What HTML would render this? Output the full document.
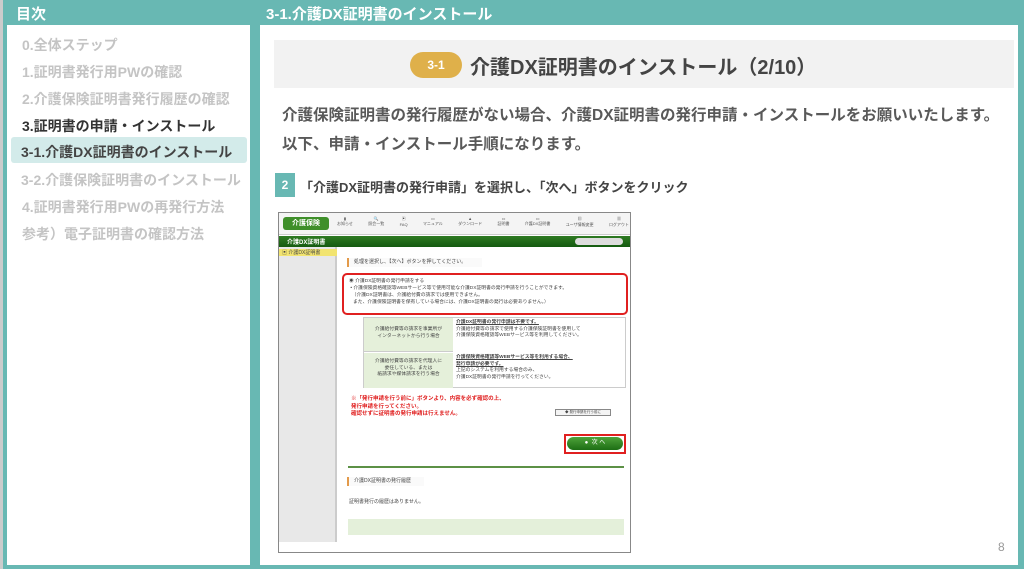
<!DOCTYPE html>
<html><head><meta charset="utf-8"><style>
*{margin:0;padding:0;box-sizing:border-box}
body{width:1024px;height:569px;background:#68b8b3;font-family:"Liberation Sans","Noto Sans CJK JP",sans-serif;position:relative;overflow:hidden}
.abs{position:absolute}
.hd{color:#fff;font-weight:bold;font-size:15px;top:3px}
.left{left:7px;top:25px;width:243px;height:540px;background:#fff}
.right{left:260px;top:25px;width:758px;height:540px;background:#fff}
.nav{position:absolute;left:15px;font-size:14px;font-weight:bold;color:#c4c4c4;white-space:nowrap}
.ss{left:278px;top:212px;width:353px;height:341px;border:1px solid #888;background:#fff;overflow:hidden;font-size:5.5px;color:#444}
</style></head><body>
<div class="abs" style="left:0;top:0;width:3px;height:569px;background:#ccc"></div>
<div class="abs hd" style="left:16px">目次</div>
<div class="abs hd" style="left:266px">3-1.介護DX証明書のインストール</div>
<div class="abs left">
 <div class="nav" style="top:10px">0.全体ステップ</div>
 <div class="nav" style="top:37px">1.証明書発行用PWの確認</div>
 <div class="nav" style="top:64px">2.介護保険証明書発行履歴の確認</div>
 <div class="nav" style="top:91px;color:#333">3.証明書の申請・インストール</div>
 <div class="abs" style="left:4px;top:112px;width:236px;height:26px;background:#d3ebea;border-radius:3px"></div>
 <div class="nav" style="top:117px;left:14px;color:#444">3-1.介護DX証明書のインストール</div>
 <div class="nav" style="top:145px;left:14px">3-2.介護保険証明書のインストール</div>
 <div class="nav" style="top:172px">4.証明書発行用PWの再発行方法</div>
 <div class="nav" style="top:199px">参考）電子証明書の確認方法</div>
</div>
<div class="abs right"></div>
<div class="abs" style="left:274px;top:40px;width:740px;height:48px;background:#f2f2f2"></div>
<div class="abs" style="left:410px;top:52px;width:52px;height:26px;border-radius:13px;background:#dfb04a;color:#fff;font-weight:bold;font-size:12px;text-align:center;line-height:26px">3-1</div>
<div class="abs" style="left:470px;top:51px;font-size:20px;font-weight:bold;color:#444">介護DX証明書のインストール（2/10）</div>
<div class="abs" style="left:282px;top:103px;font-size:15.5px;font-weight:bold;color:#595959;white-space:nowrap">介護保険証明書の発行履歴がない場合、介護DX証明書の発行申請・インストールをお願いいたします。</div>
<div class="abs" style="left:282px;top:132px;font-size:15.5px;font-weight:bold;color:#595959">以下、申請・インストール手順になります。</div>
<div class="abs" style="left:275px;top:173px;width:20px;height:24px;background:#68b8b3;color:#fff;font-weight:bold;font-size:12px;text-align:center;line-height:24px">2</div>
<div class="abs" style="left:300px;top:177px;font-size:13px;font-weight:bold;color:#444;white-space:nowrap">「介護DX証明書の発行申請」を選択し、「次へ」ボタンをクリック</div>

<div class="abs ss">
 <div class="abs" style="left:0;top:0;width:353px;height:22px;background:#f4f4f4;border-bottom:1px solid #ccc"></div>
 <div class="abs" style="left:4px;top:4px;width:46px;height:13px;background:#3f8f2a;border-radius:3px;color:#fff;font-size:7px;text-align:center;line-height:13px;font-weight:bold">介護保険</div>
 <div class="abs" style="left:58px;top:3px;width:292px;display:flex;justify-content:space-between;font-size:4px;color:#555;text-align:center">
  <div>▮<br>お知らせ</div><div>🔍<br>照会一覧</div><div>▣<br>FAQ</div><div>▭<br>マニュアル</div><div>▲<br>ダウンロード</div><div>▭<br>証明書</div><div>▭<br>介護DX証明書</div><div>▦<br>ユーザ情報変更</div><div>▦<br>ログアウト</div>
 </div>
 <div class="abs" style="left:0;top:23px;width:353px;height:11px;background:linear-gradient(#2e7a22,#145a10)"></div>
 <div class="abs" style="left:8px;top:24px;font-size:6px;color:#fff;font-weight:bold">介護DX証明書</div>
 <div class="abs" style="left:296px;top:25px;width:48px;height:7px;background:#ddd;border-radius:4px"></div>
 <div class="abs" style="left:0;top:34px;width:58px;height:245px;background:#e8e8e8;border-right:2px solid #ccc"></div>
 <div class="abs" style="left:0;top:36px;width:58px;height:7px;background:#f2e470"></div>
 <div class="abs" style="left:3px;top:36px;font-size:5px">▣ 介護DX証明書</div>
 <div class="abs" style="left:68px;top:45px;width:135px;height:9px;border-left:2px solid #e39a4a;background:#fafafa;padding-left:5px;font-size:5px">処理を選択し、【次へ】ボタンを押してください。</div>
 <div class="abs" style="left:63px;top:60px;width:286px;height:42px;border:2px solid #e02020;border-radius:5px;padding:3px 5px;font-size:4.8px;line-height:7px">◉ 介護DX証明書の発行申請をする<br>&nbsp;• 介護保険資格確認等WEBサービス等で使用可能な介護DX証明書の発行申請を行うことができます。<br>&nbsp;&nbsp;（介護DX証明書は、介護給付費の請求では使用できません。<br>&nbsp;&nbsp;&nbsp;また、介護保険証明書を保有している場合には、介護DX証明書の発行は必要ありません。）</div>
 <div class="abs" style="left:84px;top:104px;width:263px;height:71px;border:1px solid #ccc;font-size:4.8px;line-height:6.5px">
  <div class="abs" style="left:0;top:0;width:89px;height:34px;background:#e5f0da;border-bottom:1px solid #ccc;text-align:center;padding-top:9px">介護給付費等の請求を事業所が<br>インターネットから行う場合</div>
  <div class="abs" style="left:92px;top:2px"><u><b>介護DX証明書の発行申請は不要です。</b></u><br>介護給付費等の請求で使用する介護保険証明書を使用して<br>介護保険資格確認等WEBサービス等を利用してください。</div>
  <div class="abs" style="left:0;top:35px;width:89px;height:35px;background:#e5f0da;text-align:center;padding-top:6px">介護給付費等の請求を代理人に<br>委任している、または<br>紙請求や媒体請求を行う場合</div>
  <div class="abs" style="left:92px;top:37px"><u><b>介護保険資格確認等WEBサービス等を利用する場合、<br>発行申請が必要です。</b></u><br>上記のシステムを利用する場合のみ、<br>介護DX証明書の発行申請を行ってください。</div>
 </div>
 <div class="abs" style="left:72px;top:183px;color:#e02020;font-weight:bold;font-size:5.5px;line-height:7.5px">※「発行申請を行う前に」ボタンより、内容を必ず確認の上、<br>発行申請を行ってください。<br>確認せずに証明書の発行申請は行えません。</div>
 <div class="abs" style="left:276px;top:196px;width:56px;height:7px;border:1px solid #888;background:#f4f4f4;font-size:3.5px;text-align:center">◆ 発行申請を行う前に</div>
 <div class="abs" style="left:285px;top:221px;width:62px;height:20px;border:2px solid #e02020"></div>
 <div class="abs" style="left:288px;top:224px;width:56px;height:13px;border-radius:7px;background:linear-gradient(#4ea33a,#1d6e14);color:#fff;font-size:6px;text-align:center;line-height:13px">● &nbsp;次 へ</div>
 <div class="abs" style="left:69px;top:253px;width:276px;height:2px;background:#5c9146"></div>
 <div class="abs" style="left:68px;top:264px;width:77px;height:9px;border-left:2px solid #e39a4a;background:#fafafa;padding-left:5px;font-size:5px">介護DX証明書の発行履歴</div>
 <div class="abs" style="left:70px;top:285px;font-size:5px">証明書発行の履歴はありません。</div>
 <div class="abs" style="left:69px;top:306px;width:276px;height:16px;background:#e4f0da"></div>
 <div class="abs" style="left:0;top:279px;width:58px;height:50px;background:#e8e8e8;border-right:2px solid #ccc"></div>
</div>
<div class="abs" style="left:998px;top:540px;font-size:12px;color:#999">8</div>
</body></html>
